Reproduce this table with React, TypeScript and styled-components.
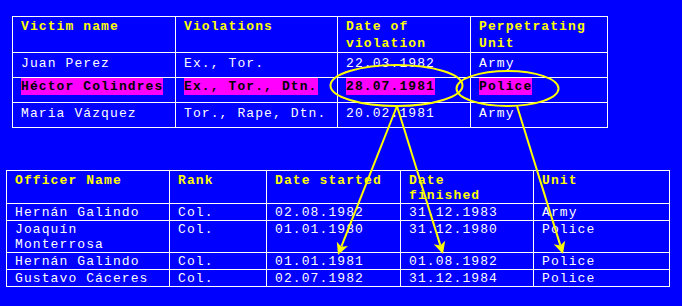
import styled, { createGlobalStyle } from "styled-components";

const GlobalStyle = createGlobalStyle`
  html, body {
    margin: 0;
    padding: 0;
    background: #0000ff;
  }
`;

interface Victim {
  name: string;
  violations: string;
  date: string;
  unit: string;
  marked?: boolean;
}

interface Officer {
  name: string;
  rank: string;
  started: string;
  finished: string;
  unit: string;
}

const victims: Victim[] = [
  { name: "Juan Perez", violations: "Ex., Tor.", date: "22.03.1982", unit: "Army" },
  {
    name: "Héctor Colindres",
    violations: "Ex., Tor., Dtn.",
    date: "28.07.1981",
    unit: "Police",
    marked: true,
  },
  { name: "Maria Vázquez", violations: "Tor., Rape, Dtn.", date: "20.02.1981", unit: "Army" },
];

const officers: Officer[] = [
  { name: "Hernán Galindo", rank: "Col.", started: "02.08.1982", finished: "31.12.1983", unit: "Army" },
  { name: "Joaquín Monterrosa", rank: "Col.", started: "01.01.1980", finished: "31.12.1980", unit: "Police" },
  { name: "Hernán Galindo", rank: "Col.", started: "01.01.1981", finished: "01.08.1982", unit: "Police" },
  { name: "Gustavo Cáceres", rank: "Col.", started: "02.07.1982", finished: "31.12.1984", unit: "Police" },
];

// arrow from (x1,y1) to the tip (x2,y2)
function arrow(x1: number, y1: number, x2: number, y2: number) {
  const dx = x2 - x1;
  const dy = y2 - y1;
  const len = Math.hypot(dx, dy);
  const ux = dx / len;
  const uy = dy / len;
  const head = 12;
  const half = 6;
  const bx = x2 - ux * head;
  const by = y2 - uy * head;
  const points = [
    [x2, y2],
    [bx - uy * half, by + ux * half],
    [bx + ux * 3, by + uy * 3],
    [bx + uy * half, by - ux * half],
  ]
    .map((p) => p.join(","))
    .join(" ");
  return { line: { x1, y1, x2: bx + ux * 3, y2: by + uy * 3 }, points };
}

const arrows = [
  arrow(397, 106, 338, 255),
  arrow(397, 106, 443, 254),
  arrow(517, 106, 563, 254),
];

export default function App() {
  return (
    <Page>
      <GlobalStyle />
      <Table $left={12} $top={16} $width={595} $line={17}>
        <colgroup>
          <col style={{ width: 163 }} />
          <col style={{ width: 162 }} />
          <col style={{ width: 133 }} />
          <col style={{ width: 137 }} />
        </colgroup>
        <thead>
          <Row $height={36}>
            <Head>Victim name</Head>
            <Head>Violations</Head>
            <Head>
              Date of
              <br />
              violation
            </Head>
            <Head>
              Perpetrating
              <br />
              Unit
            </Head>
          </Row>
        </thead>
        <tbody>
          {victims.map((v) => (
            <Row key={v.name} $height={25}>
              {[v.name, v.violations, v.date, v.unit].map((text, i) => (
                <Cell key={i} $pad={v.marked ? 0 : 2}>
                  {v.marked ? <Marked>{text}</Marked> : text}
                </Cell>
              ))}
            </Row>
          ))}
        </tbody>
      </Table>

      <Table $left={6} $top={42} $width={663} $line={15}>
        <colgroup>
          <col style={{ width: 163 }} />
          <col style={{ width: 97 }} />
          <col style={{ width: 134 }} />
          <col style={{ width: 133 }} />
          <col style={{ width: 136 }} />
        </colgroup>
        <thead>
          <Row $height={32}>
            <Head $pad={2}>Officer Name</Head>
            <Head $pad={2}>Rank</Head>
            <Head $pad={2}>Date started</Head>
            <Head $pad={2}>
              Date
              <br />
              finished
            </Head>
            <Head $pad={2}>Unit</Head>
          </Row>
        </thead>
        <tbody>
          {officers.map((o, i) => (
            <Row key={i} $height={o.name.length > 16 ? 32 : 17}>
              <Cell $pad={1}>
                {o.name.length > 16 ? (
                  <>
                    {o.name.split(" ")[0]}
                    <br />
                    {o.name.split(" ")[1]}
                  </>
                ) : (
                  o.name
                )}
              </Cell>
              <Cell $pad={1}>{o.rank}</Cell>
              <Cell $pad={1}>{o.started}</Cell>
              <Cell $pad={1}>{o.finished}</Cell>
              <Cell $pad={1}>{o.unit}</Cell>
            </Row>
          ))}
        </tbody>
      </Table>

      <Overlay width="682" height="306" viewBox="0 0 682 306">
        <g fill="none" stroke="#ffff00" strokeWidth="2">
          <ellipse cx="396.5" cy="85.5" rx="66" ry="20.5" />
          <ellipse cx="507.5" cy="88.5" rx="51" ry="17.5" />
          {arrows.map((a, i) => (
            <line key={i} {...a.line} />
          ))}
        </g>
        <g fill="#ffff00">
          {arrows.map((a, i) => (
            <polygon key={i} points={a.points} />
          ))}
        </g>
      </Overlay>
    </Page>
  );
}

const Page = styled.div`
  position: relative;
  width: 682px;
  height: 306px;
  overflow: hidden;
  display: flex;
  flex-direction: column;
  align-items: flex-start;
  background: #0000ff;
`;

const Table = styled.table<{ $left: number; $top: number; $width: number; $line: number }>`
  margin: ${(p) => p.$top}px 0 0 ${(p) => p.$left}px;
  width: ${(p) => p.$width}px;
  table-layout: fixed;
  border-collapse: collapse;
  font-family: "Liberation Mono", "DejaVu Sans Mono", monospace;
  font-size: 13px;
  letter-spacing: 1.1px;
  line-height: ${(p) => p.$line}px;
`;

const Row = styled.tr<{ $height: number }>`
  height: ${(p) => p.$height}px;
`;

const Head = styled.th<{ $pad?: number }>`
  border: 1px solid #ffffff;
  padding: ${(p) => p.$pad ?? 1}px 0 0 8px;
  vertical-align: top;
  text-align: left;
  font-weight: bold;
  color: #ffff00;
  white-space: nowrap;
`;

const Cell = styled.td<{ $pad: number }>`
  border: 1px solid #ffffff;
  padding: ${(p) => p.$pad}px 0 0 8px;
  vertical-align: top;
  color: #ffffff;
  white-space: nowrap;
`;

const Marked = styled.span`
  display: inline-block;
  background: #ff00ff;
  color: #000000;
  font-weight: bold;
`;

const Overlay = styled.svg`
  position: absolute;
  left: 0;
  top: 0;
  pointer-events: none;
`;
